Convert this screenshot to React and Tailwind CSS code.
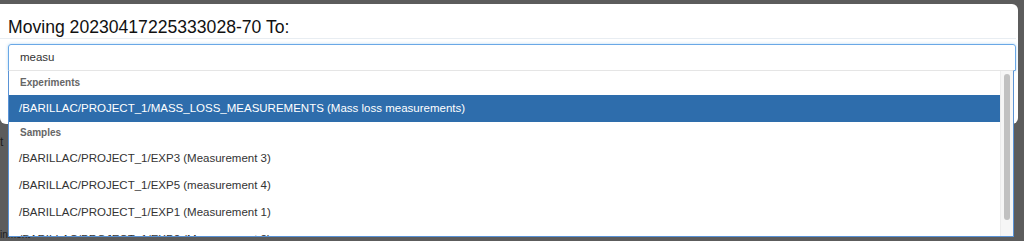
import React from "react";

const samples = [
  "/BARILLAC/PROJECT_1/EXP3 (Measurement 3)",
  "/BARILLAC/PROJECT_1/EXP5 (measurement 4)",
  "/BARILLAC/PROJECT_1/EXP1 (Measurement 1)",
  "/BARILLAC/PROJECT_1/EXP2 (Measurement 2)",
];

export default function App() {
  return (
    <div
      className="relative w-[1024px] h-[241px] overflow-hidden bg-[#5c5c5c] pt-[4px] pr-[6px]"
      style={{ fontFamily: '"Liberation Sans", Arial, sans-serif' }}
    >
      {/* modal */}
      <div className="relative z-10 h-[120px] bg-white rounded-r-[6px] rounded-bl-[6px] pr-[2px]">
        <div className="h-[35px] border-b border-[#e8edf2] pl-[8px]">
          <h3 className="pt-[12px] text-[17.6px] leading-[22px] text-[#111]">
            Moving 20230417225333028-70 To:
          </h3>
        </div>
        <div className="mt-[5px] ml-[8px] relative">
          <div className="h-[27px] border border-[#6aa8e6] rounded-t-[3px] shadow-[0_0_3px_rgba(102,175,233,0.5)] flex items-center px-[11px] text-[11.5px] text-[#333]">
            measu
          </div>

          {/* dropdown */}
          <div className="absolute left-0 right-[2px] top-[26px] h-[167px] bg-white border border-[#5a93d6] border-t-[#e5e5e5] overflow-hidden">
            <div className="flex h-full">
              <ul className="flex-1 text-[11.5px] text-[#333]">
                <li className="h-[24px] pl-[11px] pb-[1px] flex items-center text-[10px] font-bold text-[#666]">
                  Experiments
                </li>
                <li className="h-[27px] pl-[10px] flex items-center bg-[#2e6dac] text-white">
                  /BARILLAC/PROJECT_1/MASS_LOSS_MEASUREMENTS (Mass loss measurements)
                </li>
                <li className="h-[23px] pl-[11px] pb-[2px] flex items-center text-[10px] font-bold text-[#666]">
                  Samples
                </li>
                {samples.map((s) => (
                  <li key={s} className="h-[27px] pl-[10px] flex items-center">
                    {s}
                  </li>
                ))}
              </ul>
              <div className="w-[13px] bg-[#f6f6f6] border-l border-[#ececec] pt-[3px] flex justify-center">
                <div className="w-[6px] h-[146px] rounded-full bg-[#c1c1c1]" />
              </div>
            </div>
          </div>
        </div>
      </div>

      {/* page behind the modal */}
      <div className="pt-[11px] text-[12px] leading-[14px] text-[#1e1e1e]">t</div>
      <div className="pt-[80px] text-[10px] leading-[12px] text-[#1e1e1e]">inment</div>
    </div>
  );
}
